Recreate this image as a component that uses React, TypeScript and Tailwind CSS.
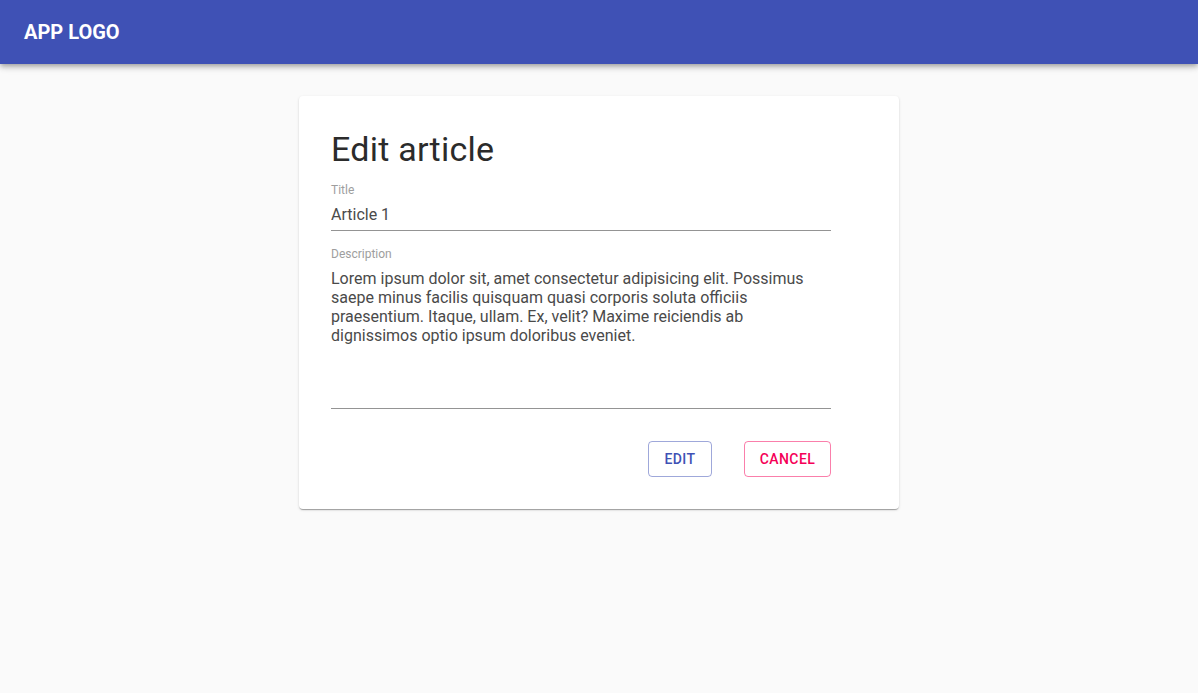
import { useState } from "react";

const App = () => {
  const [title, setTitle] = useState("Article 1");
  const [description, setDescription] = useState(
    "Lorem ipsum dolor sit, amet consectetur adipisicing elit. Possimus saepe minus facilis quisquam quasi corporis soluta officiis praesentium. Itaque, ullam. Ex, velit? Maxime reiciendis ab dignissimos optio ipsum doloribus eveniet."
  );

  return (
    <div className="min-h-[693px] bg-[#fafafa] font-['Roboto',sans-serif]">
      <header className="flex h-16 items-center bg-[#3f51b5] px-6 shadow-[0px_2px_4px_-1px_rgba(0,0,0,0.2),0px_4px_5px_0px_rgba(0,0,0,0.14),0px_1px_10px_0px_rgba(0,0,0,0.12)]">
        <h1 className="text-[20px] font-bold leading-[1.6] text-white">APP LOGO</h1>
      </header>

      <main className="flex justify-center pt-8">
        <div className="w-[600px] rounded bg-white p-8 shadow-[0px_2px_1px_-1px_rgba(0,0,0,0.2),0px_1px_1px_0px_rgba(0,0,0,0.14),0px_1px_3px_0px_rgba(0,0,0,0.12)]">
          <h2 className="text-[34px] font-normal leading-[42px] tracking-[0.00735em] text-[#2b2b2b]">Edit article</h2>

          <form className="w-[500px]" onSubmit={(e) => e.preventDefault()}>
            {/* title */}
            <div className="mt-[14px] flex flex-col">
              <label htmlFor="title" className="text-[12px] leading-[12px] text-[#9e9e9e]">Title</label>
              <input
                id="title"
                type="text"
                value={title}
                onChange={(e) => setTitle(e.target.value)}
                className="mt-[2px] border-b border-[#949494] pt-[7px] pb-[6px] text-[16px] leading-[19px] text-[#4a4a4a] outline-none"
              />
            </div>

            {/* description */}
            <div className="mt-[17px] flex flex-col">
              <label htmlFor="description" className="text-[12px] leading-[12px] text-[#9e9e9e]">Description</label>
              <textarea
                id="description"
                rows={7}
                value={description}
                onChange={(e) => setDescription(e.target.value)}
                className="mt-[3px] resize-none border-b border-[#949494] pt-[6px] pb-[6px] text-[16px] leading-[19px] text-[#4a4a4a] outline-none"
              />
            </div>

            <div className="mt-8 flex justify-end gap-8">
              <button
                type="submit"
                className="h-9 w-16 rounded border border-[rgba(63,81,181,0.5)] text-[14px] font-medium uppercase tracking-[0.02857em] text-[#3f51b5]"
              >
                Edit
              </button>
              <button
                type="button"
                className="h-9 w-[87px] rounded border border-[rgba(245,0,87,0.5)] text-[14px] font-medium uppercase tracking-[0.02857em] text-[#f50057]"
              >
                Cancel
              </button>
            </div>
          </form>
        </div>
      </main>
    </div>
  );
};

export default App;
